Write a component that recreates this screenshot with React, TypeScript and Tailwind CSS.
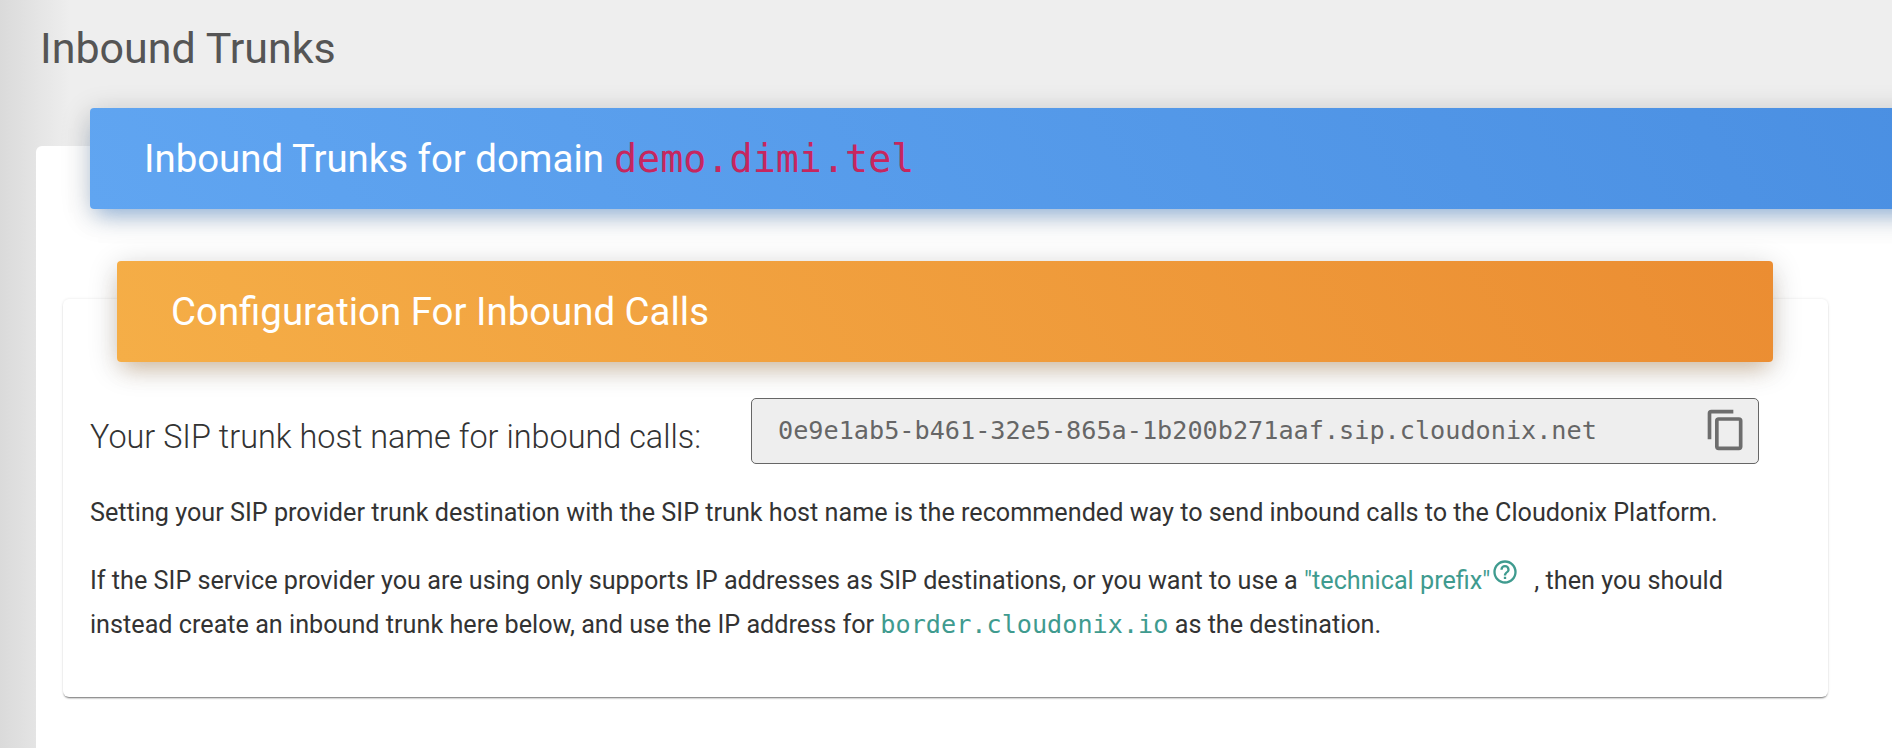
const mono = "font-['DejaVu_Sans_Mono',monospace]";

const CopyIcon = () => (
    <svg viewBox="0 0 24 24" className="w-[44px] h-[44px] -mt-[2px] fill-[#6d6d6d]">
        <path d="M19,21H8V7H19M19,5H8A2,2 0 0,0 6,7V21A2,2 0 0,0 8,23H19A2,2 0 0,0 21,21V7A2,2 0 0,0 19,5M16,1H4A2,2 0 0,0 2,3V17H4V3H16V1Z" />
    </svg>
);

const HelpIcon = () => (
    <svg viewBox="0 0 24 24" className="inline-block ml-[1px] w-[28px] h-[28px] fill-[#3f9b8f] relative top-[-3px] align-baseline">
        <path d="M11,18H13V16H11V18M12,2A10,10 0 0,0 2,12A10,10 0 0,0 12,22A10,10 0 0,0 22,12A10,10 0 0,0 12,2M12,20C7.59,20 4,16.41 4,12C4,7.59 7.59,4 12,4C16.41,4 20,7.59 20,12C20,16.41 16.41,20 12,20M12,6A4,4 0 0,0 8,10H10A2,2 0 0,1 12,8A2,2 0 0,1 14,10C14,12 11,11.75 11,15H13C13,12.75 16,12.5 16,10A4,4 0 0,0 12,6Z" />
    </svg>
);

export default function App() {
    return (
        <div className="relative h-[748px] w-[1892px] overflow-hidden bg-[#eeeeee] font-['Roboto',sans-serif]">
            {/* sidebar shadow on the left edge */}
            <div className="absolute left-0 top-0 h-full w-[70px] bg-gradient-to-r from-[#dadada] to-[#eeeeee]" />

            <div className="relative pl-[36px]">
                <h1 className="pt-[21px] pl-[4px] text-[43px] leading-[54px] font-normal text-[#555555]">Inbound Trunks</h1>

                <div className="flow-root mt-[71px] w-[1900px] h-[700px] rounded-t-[6px] bg-white">
                    <div className="relative ml-[54px] -mt-[38px] flex h-[101px] w-[1860px] items-center rounded-[4px] bg-[linear-gradient(60deg,#60a5f1,#4a8fe2)] pl-[54px] text-[38.4px] text-white shadow-[0_12px_20px_-8px_rgba(74,144,226,0.5),0_6px_30px_0_rgba(0,0,0,0.2)]">
                        <span>Inbound Trunks for domain</span>
                        <code className={`${mono} ml-[10px] text-[38.4px] text-[#c6265f]`}>demo.dimi.tel</code>
                    </div>

                    <div className="flow-root ml-[27px] mt-[90px] w-[1765px] rounded-[6px] bg-white px-[27px] pb-[50px] shadow-[0_2px_2px_-1px_rgba(0,0,0,0.55),0_0_3px_0_rgba(0,0,0,0.1)]">
                        <div className="relative ml-[27px] -mt-[38px] flex h-[101px] w-[1656px] items-center rounded-[4px] bg-[linear-gradient(60deg,#f5ae47,#eb8d32)] pl-[54px] text-[38.4px] text-white shadow-[0_12px_20px_-8px_rgba(200,140,70,0.4),0_6px_30px_0_rgba(0,0,0,0.2)]">
                            Configuration For Inbound Calls
                        </div>

                        <div className="mt-[36px] mr-[42px] flex items-center justify-between">
                            <span className="pt-[12px] text-[32.4px] font-light text-[#333333]">Your SIP trunk host name for inbound calls:</span>
                            <div className="flex h-[66px] w-[1008px] items-center justify-between rounded-[5px] border border-[#666666] bg-[#eeeeee] pl-[26px] pr-[10px]">
                                <span className={`${mono} text-[25.2px] text-[#666666]`}>0e9e1ab5-b461-32e5-865a-1b200b271aaf.sip.cloudonix.net</span>
                                <CopyIcon />
                            </div>
                        </div>

                        <p className="mt-[27px] text-[25.2px] leading-[44px] text-[#333333]">
                            Setting your SIP provider trunk destination with the SIP trunk host name is the recommended way to send inbound calls to the Cloudonix Platform.
                        </p>
                        <p className="mt-[24px] text-[25.2px] leading-[44px] text-[#333333]">
                            If the SIP service provider you are using only supports IP addresses as SIP destinations, or you want to use a{' '}
                            <a className="text-[#3f9b8f]">"technical prefix"<HelpIcon /></a>
                            <span className="ml-[15px]">, then you should</span>
                            <br />
                            instead create an inbound trunk here below, and use the IP address for{' '}
                            <code className={`${mono} text-[25.2px] text-[#3f9b8f]`}>border.cloudonix.io</code> as the destination.
                        </p>
                    </div>

                    {/* next card's header, only its shadow shows at the bottom of the window */}
                    <div className="ml-[54px] mt-[68px] h-[40px] w-[70px] rounded-[4px] shadow-[0_4px_20px_0_rgba(0,0,0,0.14)]" />
                </div>
            </div>
        </div>
    );
}
